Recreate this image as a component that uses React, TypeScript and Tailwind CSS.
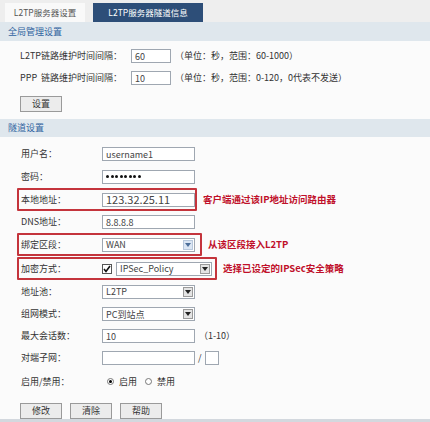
import React from 'react';

const font = { fontFamily: '"Noto Sans CJK SC", "Liberation Sans", sans-serif' };

const Input = ({ w = 'w-[93px]', value = '', className = '', children }: { w?: string; value?: string; className?: string; children?: React.ReactNode }) => (
    <div className={`h-[14px] ${w} border border-[#9fa7b1] bg-white flex items-center px-[3px] text-[9px] text-[#444] leading-none ${className}`}>
        {value}
        {children}
    </div>
);

const Select = ({ w = 'w-[93px]', value, light = false }: { w?: string; value: string; light?: boolean }) => (
    <div className={`h-[14px] ${w} border border-[#9fa7b1] bg-white flex items-center justify-between pl-[3px] pr-[1px] text-[9px] text-[#444] leading-none`}>
        <span>{value}</span>
        <span className={`w-[10px] h-[10px] flex items-center justify-center border ${light ? 'bg-[#dbe6f4] border-[#b8c8dc]' : 'bg-[#e4e4e4] border-[#9a9a9a]'}`}>
            <svg width="6" height="4" viewBox="0 0 6 4">
                <path d="M0 0 L6 0 L3 4 Z" fill={light ? '#4d6f9a' : '#222'} />
            </svg>
        </span>
    </div>
);

const Btn = ({ label }: { label: string }) => (
    <div className="w-[42px] h-[16px] border border-[#9a9a9a] bg-[#ececec] flex items-center justify-center text-[9px] text-[#333]">
        {label}
    </div>
);

const Row = ({ h, label, children }: { h: string; label: string; children: React.ReactNode }) => (
    <div className={`${h} flex items-center`}>
        <div className="w-[102px] pl-[21px] text-[9px] text-[#333]">{label}</div>
        {children}
    </div>
);

const Boxed = ({ w, label, note, children }: { w: string; label: string; note: string; children: React.ReactNode }) => (
    <div className="flex items-center">
        <div className={`${w} ml-[17px] h-[23px] border-2 border-[#c4343c] rounded-[1px] flex items-center`}>
            <div className="w-[83px] pl-[2px] text-[9px] text-[#333]">{label}</div>
            {children}
        </div>
        <span className="ml-[6px] text-[9.5px] font-bold text-[#c0102a]">{note}</span>
    </div>
);

export default function App() {
    return (
        <div style={font} className="w-[430px] h-[422px] bg-[#fbfbfb] flex flex-col overflow-hidden">
            <div className="h-[22px] bg-[#eeeeee] flex items-end gap-[8px] pl-[5px]">
                <div className="w-[80px] h-[19px] bg-[#f9f9f9] flex items-center justify-center text-[8.5px] text-[#555]">
                    L2TP服务器设置
                </div>
                <div className="w-[110px] h-[19px] bg-[#2d4e78] flex items-center justify-center text-[8.5px] text-white">
                    L2TP服务器隧道信息
                </div>
            </div>
            <div className="h-[19px] bg-[#dfe7ed] flex items-center pl-[8px] text-[9px] text-[#2f63a0]">全局管理设置</div>
            <div className="h-[4px]" />
            <div className="h-[22px] flex items-center pl-[20px] text-[9px] text-[#333]">
                <span className="w-[111px]">L2TP链路维护时间间隔：</span>
                <Input w="w-[40px]" value="60" />
                <span className="ml-[4px]">（单位：秒，范围：60-1000）</span>
            </div>
            <div className="h-[22px] flex items-center pl-[20px] text-[9px] text-[#333]">
                <span className="w-[111px]">PPP&nbsp;&nbsp;链路维护时间间隔：</span>
                <Input w="w-[40px]" value="10" />
                <span className="ml-[4px]">（单位：秒，范围：0-120，0代表不发送）</span>
            </div>
            <div className="h-[30px] flex items-center pl-[20px]">
                <Btn label="设置" />
            </div>
            <div className="h-[18px] bg-[#dfe7ed] flex items-center pl-[8px] text-[9px] text-[#2f63a0]">隧道设置</div>
            <div className="h-[6px]" />
            <Row h="h-[22px]" label="用户名：">
                <Input value="username1" />
            </Row>
            <Row h="h-[23px]" label="密码：">
                <Input className="gap-[1.5px]">
                    {[0, 1, 2, 3, 4, 5, 6, 7].map(i => (
                        <span key={i} className="w-[3px] h-[3px] rounded-full bg-[#111]" />
                    ))}
                </Input>
            </Row>
            <Boxed w="w-[180px]" label="本地地址：" note="客户端通过该IP地址访问路由器">
                <Input value="123.32.25.11" className="text-[11px]" />
            </Boxed>
            <Row h="h-[22px]" label="DNS地址：">
                <Input value="8.8.8.8" />
            </Row>
            <Boxed w="w-[185px]" label="绑定区段：" note="从该区段接入L2TP">
                <Select value="WAN" light />
            </Boxed>
            <div className="h-[1px]" />
            <Boxed w="w-[200px]" label="加密方式：" note="选择已设定的IPSec安全策略">
                <div className="flex items-center gap-[4px]">
                    <span className="w-[10px] h-[10px] border border-[#555] bg-white flex items-center justify-center">
                        <svg width="8" height="8" viewBox="0 0 8 8">
                            <path d="M1 4 L3 6.5 L7 1" stroke="#111" strokeWidth="1.6" fill="none" />
                        </svg>
                    </span>
                    <Select w="w-[96px]" value="IPSec_Policy" />
                </div>
            </Boxed>
            <Row h="h-[23px]" label="地址池：">
                <Select value="L2TP" />
            </Row>
            <Row h="h-[22px]" label="组网模式：">
                <Select value="PC到站点" />
            </Row>
            <Row h="h-[22px]" label="最大会话数：">
                <Input value="10" />
                <span className="ml-[4px] text-[9px] text-[#333]">（1-10）</span>
            </Row>
            <Row h="h-[22px]" label="对端子网：">
                <Input value="" />
                <span className="mx-[3px] text-[9px] text-[#333]">/</span>
                <Input w="w-[14px]" value="" />
            </Row>
            <Row h="h-[25px]" label="启用/禁用：">
                <div className="flex items-center text-[9px] text-[#333] pl-[5px]">
                    <span className="w-[7px] h-[7px] rounded-full border border-[#777] bg-white flex items-center justify-center">
                        <span className="w-[3px] h-[3px] rounded-full bg-black" />
                    </span>
                    <span className="ml-[5px]">启用</span>
                    <span className="ml-[8px] w-[7px] h-[7px] rounded-full border border-[#777] bg-white" />
                    <span className="ml-[5px]">禁用</span>
                </div>
            </Row>
            <div className="h-[9px]" />
            <div className="flex items-center gap-[8px] pl-[20px]">
                <Btn label="修改" />
                <Btn label="清除" />
                <Btn label="帮助" />
            </div>
            <div className="flex-1" />
            <div className="h-[3px] bg-[#d3d8de]" />
        </div>
    );
}
